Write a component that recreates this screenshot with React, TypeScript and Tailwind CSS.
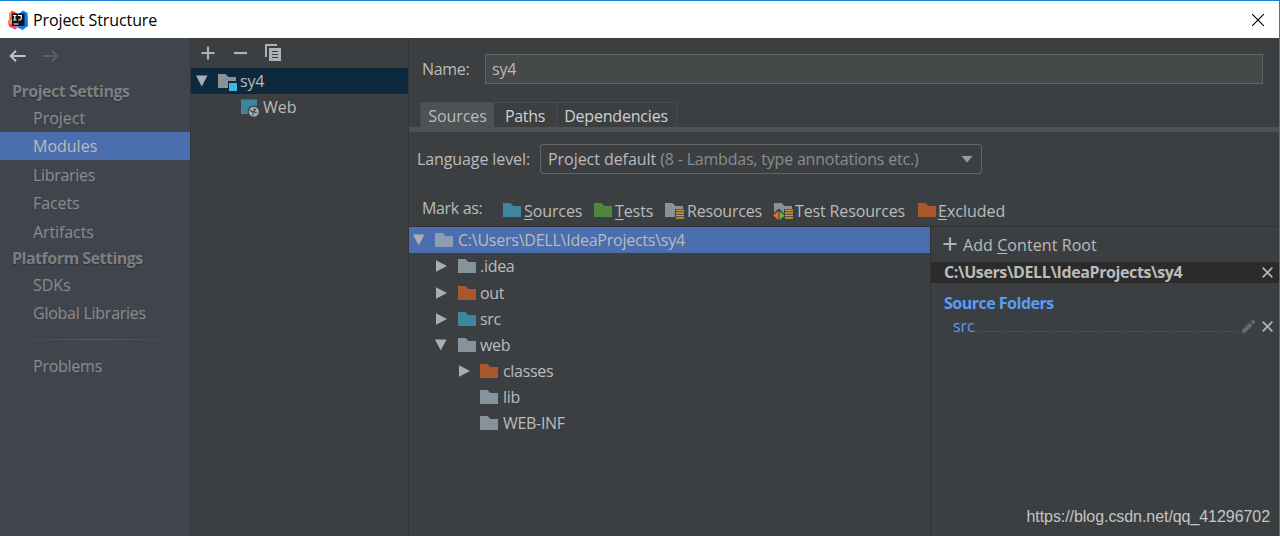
import React from "react";

const GRAY = "#87939a";
const TEAL = "#3e86a0";
const RUST = "#ab572d";
const GREEN = "#52863e";

function Folder({ color = GRAY, children }: { color?: string; children?: React.ReactNode }) {
  return (
    <svg width="20" height="18" viewBox="0 0 20 18" className="shrink-0 overflow-visible">
      <path d="M0 2h7.500l3 3H18v11H0z" fill={color} />
      {children}
    </svg>
  );
}

function Lines() {
  return (
    <g>
      <path d="M10 8h9v10h-9z" fill="#3c3f41" />
      <path d="M11 9.500h8M11 12h8M11 14.500h8M11 17h8" stroke="#d09a3a" strokeWidth="1.4" />
    </g>
  );
}

function Arrow({ open = false }: { open?: boolean }) {
  return (
    <svg width="12" height="12" viewBox="0 0 12 12" className="shrink-0 overflow-visible">
      <path d={open ? "M0 .5h11.500L5.750 11.500z" : "M1 .2l11 5.800-11 5.800z"} fill="#adadad" />
    </svg>
  );
}

function Plus() {
  return (
    <svg width="14" height="14" viewBox="0 0 14 14" className="shrink-0">
      <path d="M7 .5v13M.5 7h13" stroke="#afb1b3" strokeWidth="2.2" />
    </svg>
  );
}

function Cross() {
  return (
    <svg width="11" height="11" viewBox="0 0 11 11" className="shrink-0">
      <path d="M.7.7l9.6 9.6M10.3.7L.7 10.3" stroke="#afb1b3" strokeWidth="1.8" />
    </svg>
  );
}

function TitleBar() {
  return (
    <header className="flex h-[38px] shrink-0 items-center border-t border-[#1a7fd4] bg-white pr-[15px] pl-2 text-black">
      <svg width="20" height="20" viewBox="0 0 20 20" className="shrink-0">
        <path d="M1 3.500L3.500 1l4 3-3 12L1 14z" fill="#f99a42" />
        <path d="M3.500.5L9 3v7l-8 1 2-4z" fill="#f0335f" />
        <path d="M11 3.500l4-3L19.500 3l.5 13-5.500 4L9 17z" fill="#087cf0" />
        <path d="M0 12l4-3 1 7 5 .5-2.500 3L1 16.500z" fill="#f0406a" />
        <path d="M0 10l4-1v5l-3 .5z" fill="#fb8a3e" />
        <path d="M4 3.500h12.500v12.500H4z" fill="#151515" />
        <path d="M5.200 5.500h3.300M6.850 5.500V10M5.200 10h3.300M10 5.500h3.200v3.300q0 1.200-1.200 1.200h-1.800M5.500 14h5" fill="none" stroke="#fff" strokeWidth="1.200" />
      </svg>
      <h1 className="ml-[5px] flex-1 text-[16px] tracking-[-0.1px]">Project Structure</h1>
      <svg width="12" height="12" viewBox="0 0 12 12">
        <path d="M0 0l12 12M12 0L0 12" stroke="#000" strokeWidth="1.1" />
      </svg>
    </header>
  );
}

function Sidebar() {
  return (
    <nav className="flex w-[191px] shrink-0 flex-col border-r border-[#333536] bg-[#40444d] text-[#8c8c8c]">
      <div className="flex h-[40px] items-center gap-4 pl-[9px]">
        <svg width="17" height="13" viewBox="0 0 17 13" className="mb-1 fill-none stroke-[#c0c2c4] stroke-2">
          <path d="M16.500 6H2M7 .7L1.700 6 7 11.300" />
        </svg>
        <svg width="17" height="13" viewBox="0 0 17 13" className="mb-1 fill-none stroke-[#5d5f62] stroke-2">
          <path d="M.5 6H15M10 .7L15.300 6 10 11.300" />
        </svg>
      </div>
      <h2 className="flex h-[26px] items-center pl-3 font-bold tracking-[-0.5px] text-[#7d7f82] [text-shadow:0_1px_1px_#2f3238]">Project Settings</h2>
      <div className="flex h-[28px] items-center pb-px pl-[33px] tracking-normal">Project</div>
      <div className="flex h-[28px] items-center bg-[#4b6eaf] pl-[33px] tracking-normal text-[#bbbbbb]">Modules</div>
      <div className="flex h-[29px] items-center pl-[33px] tracking-[-0.3px]">Libraries</div>
      <div className="flex h-[28px] items-center pl-[33px]">Facets</div>
      <div className="flex h-[29px] items-center pl-[33px]">Artifacts</div>
      <h2 className="flex h-[25px] items-center pb-px pl-3 font-bold tracking-[-0.5px] text-[#7d7f82] [text-shadow:0_1px_1px_#2f3238]">Platform Settings</h2>
      <div className="flex h-[28px] items-center pl-[33px]">SDKs</div>
      <div className="flex h-[28px] items-center pl-[33px] tracking-[-0.25px]">Global Libraries</div>
      <div className="mx-[10px] mt-[12px] h-px bg-linear-to-r from-transparent via-[#5a5c61] to-transparent" />
      <div className="mt-[12px] flex h-[28px] items-center pl-[33px] tracking-[-0.25px]">Problems</div>
    </nav>
  );
}

function ModulesPane() {
  return (
    <section className="flex w-[218px] shrink-0 flex-col border-r border-[#333536]">
      <div className="flex h-[30px] items-center pl-[10px]">
        <Plus />
        <svg width="13" height="14" viewBox="0 0 13 14" className="ml-[19px]">
          <path d="M0 7h13" stroke="#afb1b3" strokeWidth="2.2" />
        </svg>
        <svg width="16" height="17" viewBox="0 0 16 17" className="mb-px ml-[18px]">
          <path d="M1 13V1h11" fill="none" stroke="#afb1b3" strokeWidth="2" />
          <path d="M4 4h12v13H4z" fill="#afb1b3" />
          <path d="M7 7.500h6M7 10.500h6M7 13.500h6" stroke="#3c3f41" strokeWidth="1.2" />
        </svg>
      </div>
      <div className="flex h-[26px] items-center bg-[#0d293e] pl-[5px]">
        <Arrow open />
        <span className="ml-[10px] flex">
          <Folder>
            <path d="M10 9h9v10h-9z" fill="#0d293e" />
            <path d="M11 11h8v8h-8z" fill="#40b6e0" />
          </Folder>
        </span>
        <span className="ml-[2px] tracking-[-0.2px]">sy4</span>
      </div>
      <div className="flex h-[26px] items-center pl-[50px]">
        <svg width="18" height="18" viewBox="0 0 18 18" className="overflow-visible">
          <path d="M0 1.500h16v14.500H0z" fill={TEAL} />
          <circle cx="12.800" cy="13.800" r="6.300" fill="#3c3f41" />
          <circle cx="12.800" cy="13.800" r="5" fill="#a3adb3" />
          <path d="M8.800 12l3.200 2.200v3.300M12.500 10.800l2 .7-2 2 3.200 1.500" fill="none" stroke="#3c3f41" strokeWidth="1.100" />
        </svg>
        <span className="ml-1 tracking-normal">Web</span>
      </div>
    </section>
  );
}

type Row = { name: string; indent: string; color?: string; open?: boolean; leaf?: boolean };
const rows: Row[] = [
  { name: ".idea", indent: "pl-[26px]" },
  { name: "out", indent: "pl-[26px]", color: RUST },
  { name: "src", indent: "pl-[26px]", color: TEAL },
  { name: "web", indent: "pl-[26px]", open: true },
  { name: "classes", indent: "pl-[49px]", color: RUST },
  { name: "lib", indent: "pl-[49px]", leaf: true },
  { name: "WEB-INF", indent: "pl-[49px]", leaf: true },
];

function FileTree() {
  return (
    <div className="flex w-[522px] shrink-0 flex-col border-r border-[#323232]">
      <div className="mb-[0.4px] flex h-[26px] items-center bg-[#4b6eaf] pl-1">
        <Arrow open />
        <span className="ml-[10px] flex"><Folder color="#8d9db5" /></span>
        <span className="ml-[3px] tracking-[-0.24px]">C:\Users\DELL\IdeaProjects\sy4</span>
      </div>
      {rows.map((r) => (
        <div key={r.name} className={`flex h-[26.17px] items-center ${r.indent}`}>
          {r.leaf ? <span className="w-3" /> : <Arrow open={r.open} />}
          <span className={r.indent === "pl-[49px]" ? "mr-px ml-[10px] flex" : "ml-[11px] flex"}><Folder color={r.color} /></span>
          <span className="ml-[2px] tracking-[-0.3px]">{r.name}</span>
        </div>
      ))}
    </div>
  );
}

function ContentRoots() {
  return (
    <aside className="flex min-w-0 flex-1 flex-col">
      <div className="flex h-[35px] items-center pl-[12px]">
        <span className="mb-[2px] flex"><Plus /></span>
        <span className="ml-[6px] tracking-[0.08px]">Add <span className="underline underline-offset-2">C</span>ontent Root</span>
      </div>
      <div className="flex h-[21px] items-center justify-between bg-[#2b2b2b] pr-[6px] pl-[13px]">
        <b className="leading-[21px] font-bold tracking-[-0.4px]">C:\Users\DELL\IdeaProjects\sy4</b>
        <Cross />
      </div>
      <h3 className="mt-[9px] flex h-[22px] items-center pl-[13px] font-bold tracking-[-0.5px] text-[#589df6]">Source Folders</h3>
      <div className="flex h-[24px] items-center pr-[6px] pl-[22px] text-[#589df6]">
        <span>src</span>
        <div className="mt-[11px] mr-[5px] h-px flex-1 bg-[repeating-linear-gradient(90deg,#606365_0_1px,transparent_1px_3px)]" />
        <svg width="13" height="13" viewBox="0 0 13 13" className="mr-[7px]" fill="#66696b">
          <path d="M0 13v-3l7.500-7.500 3 3L3 13zM8.500 1.500L10 0h1.500L13 1.500V3l-1.500 1.500z" />
        </svg>
        <Cross />
      </div>
    </aside>
  );
}

function MarkAs() {
  return (
    <div className="flex h-[37px] items-center pt-[2px] pl-[13px]">
      <span className="mb-[1px] w-[81px] tracking-[-0.35px]">Mark as:</span>
      <div className="mt-[4px] flex items-center">
        <div className="flex w-[91px] items-center"><span className="mb-[2px] flex"><Folder color={TEAL} /></span><span className="ml-[1px]"><u className="underline-offset-2">S</u>ources</span></div>
        <div className="flex w-[71px] items-center"><span className="mb-[2px] flex"><Folder color={GREEN} /></span><span className="ml-[1px]"><u className="underline-offset-2">T</u>ests</span></div>
        <div className="flex w-[109px] items-center"><span className="mb-[2px] flex"><Folder><Lines /></Folder></span><span className="ml-[2px] tracking-[-0.2px]">Resources</span></div>
        <div className="flex w-[144px] items-center">
          <span className="mb-[2px] flex">
            <Folder>
              <Lines />
              <path d="M-2 14l6-6h2l5 6-5 5H4z" fill="#3c3f41" />
              <path d="M-1 14.500L4.500 10v9z" fill="#f26522" />
              <path d="M5.500 10l5 4.500-5 4.500z" fill="#62b543" />
            </Folder>
          </span>
          <span className="ml-[1px] tracking-[-0.14px]">Test Resources</span>
        </div>
        <div className="flex items-center"><span className="mb-[2px] flex"><Folder color={RUST} /></span><span className="tracking-normal"><u className="underline-offset-2">E</u>xcluded</span></div>
      </div>
    </div>
  );
}

function Editor() {
  return (
    <main className="flex min-w-0 flex-1 flex-col">
      <div className="mt-[16px] flex h-[30px] items-center pr-[16px] pl-[13px]">
        <label className="w-[63px] pb-px tracking-[-0.3px]">Name:</label>
        <div className="flex h-[30px] flex-1 items-center border border-[#646464] bg-[#45494a] pl-[6px] tracking-[-0.2px]">sy4</div>
      </div>
      <div className="mt-[18px] flex h-[25px] pl-[11px]">
        <div className="flex w-[74px] items-center justify-center border-t border-l border-[#4b4b4b] bg-[#4e5254] pt-[2px]">Sources</div>
        <div className="flex w-[63px] items-center justify-center border-t border-r border-[#4b4b4b] pt-[2px] tracking-[-0.3px] text-[#d0d0d0]">Paths</div>
        <div className="flex w-[120px] items-center justify-center border-t border-r border-[#4b4b4b] pt-[2px] pr-px tracking-[-0.2px] text-[#d0d0d0]">Dependencies</div>
      </div>
      <div className="h-[5px] shrink-0 bg-[#4e5254]" />
      <div className="mt-[12px] flex h-[30px] shrink-0 items-center pl-[8px]">
        <label className="w-[123px] pb-px tracking-[-0.1px]">Language level:</label>
        <div className="flex h-[30px] w-[442px] items-center justify-between rounded-[3px] border border-[#646464] pr-[8px] pb-px pl-[7px]">
          <span><span className="tracking-[-0.05px]">Project default </span><span className="tracking-[-0.2px] text-[#8c8c8c]">(8 - Lambdas, type annotations etc.)</span></span>
          <svg width="12" height="7" viewBox="0 0 12 7" className="mt-[2px]"><path d="M.5 0h11L6 6.500z" fill="#9a9da0" /></svg>
        </div>
      </div>
      <div className="mt-[15px]"><MarkAs /></div>
      <div className="flex min-h-0 flex-1 border-t border-[#323232]">
        <FileTree />
        <ContentRoots />
      </div>
    </main>
  );
}

export default function App() {
  return (
    <div className="relative flex h-[536px] w-[1280px] flex-col overflow-hidden border-r border-[#1a7fd4] bg-[#3c3f41] font-['Open_Sans','Noto_Sans',sans-serif] text-[16px] leading-5 tracking-[-0.1px] whitespace-nowrap text-[#bbbbbb]">
      <TitleBar />
      <div className="flex min-h-0 flex-1">
        <Sidebar />
        <ModulesPane />
        <Editor />
      </div>
      <div className="absolute right-[9px] bottom-[9px] font-['Liberation_Sans',sans-serif] text-[16px] tracking-[-0.06px] text-[#c4c5c5]">https://blog.csdn.net/qq_41296702</div>
    </div>
  );
}
